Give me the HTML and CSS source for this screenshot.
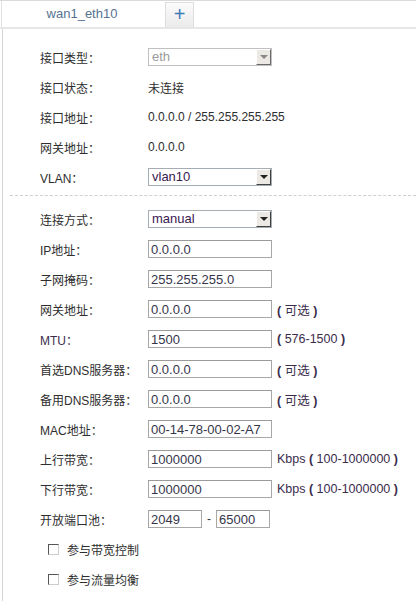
FILE: index.html
```html
<!DOCTYPE html>
<html>
<head>
<meta charset="utf-8">
<link rel="stylesheet" href="styles.css">
</head>
<body>
<div class="tabbar">
  <div class="tab">wan1_eth10</div>
  <div class="add">+</div>
</div>
<div class="panel">
  <div class="row"><span class="label">接口类型：</span><div class="select disabled"><span class="val">eth</span><span class="arrow"></span></div></div>
  <div class="row"><span class="label">接口状态：</span><span class="text">未连接</span></div>
  <div class="row"><span class="label">接口地址：</span><span class="text">0.0.0.0 / 255.255.255.255</span></div>
  <div class="row"><span class="label">网关地址：</span><span class="text">0.0.0.0</span></div>
  <div class="row"><span class="label">VLAN：</span><div class="select"><span class="val">vlan10</span><span class="arrow"></span></div></div>
  <div class="divider"></div>
  <div class="row"><span class="label">连接方式：</span><div class="select"><span class="val">manual</span><span class="arrow"></span></div></div>
  <div class="row"><span class="label">IP地址：</span><input class="field" value="0.0.0.0"></div>
  <div class="row"><span class="label">子网掩码：</span><input class="field" value="255.255.255.0"></div>
  <div class="row"><span class="label">网关地址：</span><input class="field" value="0.0.0.0"><span class="hint"><b>(</b> 可选 <b>)</b></span></div>
  <div class="row"><span class="label purple">MTU：</span><input class="field" value="1500"><span class="hint"><b>(</b> 576-1500 <b>)</b></span></div>
  <div class="row"><span class="label">首选DNS服务器：</span><input class="field" value="0.0.0.0"><span class="hint"><b>(</b> 可选 <b>)</b></span></div>
  <div class="row"><span class="label">备用DNS服务器：</span><input class="field" value="0.0.0.0"><span class="hint"><b>(</b> 可选 <b>)</b></span></div>
  <div class="row"><span class="label">MAC地址：</span><input class="field" value="00-14-78-00-02-A7"></div>
  <div class="row"><span class="label">上行带宽：</span><input class="field" value="1000000"><span class="hint">Kbps <b>(</b> 100-1000000 <b>)</b></span></div>
  <div class="row"><span class="label">下行带宽：</span><input class="field" value="1000000"><span class="hint">Kbps <b>(</b> 100-1000000 <b>)</b></span></div>
  <div class="row"><span class="label">开放端口池：</span><input class="field small" value="2049"><span class="dash">-</span><input class="field small" value="65000"></div>
  <div class="row check"><span class="box"></span><span class="text">参与带宽控制</span></div>
  <div class="row check"><span class="box"></span><span class="text">参与流量均衡</span></div>
</div>
</body>
</html>
```
FILE: styles.css
```css
html, body {
  margin: 0;
  padding: 0;
  background: #ffffff;
}
body {
  font-family: "Liberation Sans", "Noto Sans CJK SC", sans-serif;
  font-size: 12px;
  color: #333333;
  width: 416px;
  height: 601px;
  overflow: hidden;
}
.tabbar {
  display: flex;
  height: 26px;
  border-top: 1px solid #dadada;
  border-bottom: 2px solid #e6e6e6;
}
.tab {
  width: 160px;
  line-height: 26px;
  text-align: center;
  color: #55728f;
  font-size: 13px;
  border-left: 1px solid #e2e2e2;
  margin-left: 1px;
}
.add {
  margin-left: 3px;
  margin-top: 1px;
  width: 29px;
  height: 25px;
  box-sizing: border-box;
  border: 1px solid #dddddd;
  border-bottom: none;
  background: linear-gradient(#fbfbfb, #ebebeb);
  color: #3d7ab8;
  font-size: 20px;
  line-height: 22px;
  text-align: center;
}
.panel {
  box-sizing: border-box;
  margin-left: 2px;
  border-left: 1px solid #d4d4d4;
  padding-top: 13px;
  height: 572px;
}
.row {
  display: flex;
  align-items: center;
  height: 30px;
  padding-left: 37px;
}
.label {
  width: 108px;
  flex: none;
  color: #2e2e2e;
}
.label.purple {
  color: #3b2c4c;
}
.text {
  color: #2e2e2e;
}
.divider {
  margin: 3px 0 8px 7px;
  border-top: 1px dashed #cfcfcf;
}
.field {
  box-sizing: border-box;
  width: 124px;
  height: 18px;
  border: 1px solid #a7a7a7;
  border-top-color: #9a9a9a;
  padding: 1px 2px 0;
  margin: 0;
  font-family: "Liberation Sans", "Noto Sans CJK SC", sans-serif;
  font-size: 13px;
  color: #35354a;
  outline: none;
}
.field.small {
  width: 54px;
}
.dash {
  margin: 0 5px;
}
.hint {
  margin-left: 5px;
  color: #3b2c4c;
  font-size: 12.5px;
  white-space: nowrap;
}
.hint b {
  font-weight: bold;
}
.select {
  box-sizing: border-box;
  width: 124px;
  height: 18px;
  border: 1px solid #a5acb2;
  display: flex;
  align-items: stretch;
}
.select .val {
  flex: 1;
  padding-left: 3px;
  font-size: 13px;
  line-height: 16px;
  color: #3a2050;
}
.select .arrow {
  width: 15px;
  box-sizing: border-box;
  border: 1px solid #ffffff;
  border-right-color: #404040;
  border-bottom-color: #404040;
  background: #ece9e4;
  position: relative;
}
.select .arrow::after {
  content: "";
  position: absolute;
  left: 3px;
  top: 5px;
  border-left: 4px solid transparent;
  border-right: 4px solid transparent;
  border-top: 4px solid #222;
}
.select.disabled {
  border-color: #c0c0c0;
}
.select.disabled .val {
  color: #9a9a9a;
}
.select.disabled .arrow {
  border-right-color: #6a6a6a;
  border-bottom-color: #6a6a6a;
}
.select.disabled .arrow::after {
  border-top-color: #888;
}
.check {
  padding-left: 45px;
}
.box {
  width: 11px;
  height: 11px;
  box-sizing: border-box;
  border: 1px solid #555;
  border-right-color: #ccc;
  border-bottom-color: #ccc;
  margin-right: 8px;
}
```
